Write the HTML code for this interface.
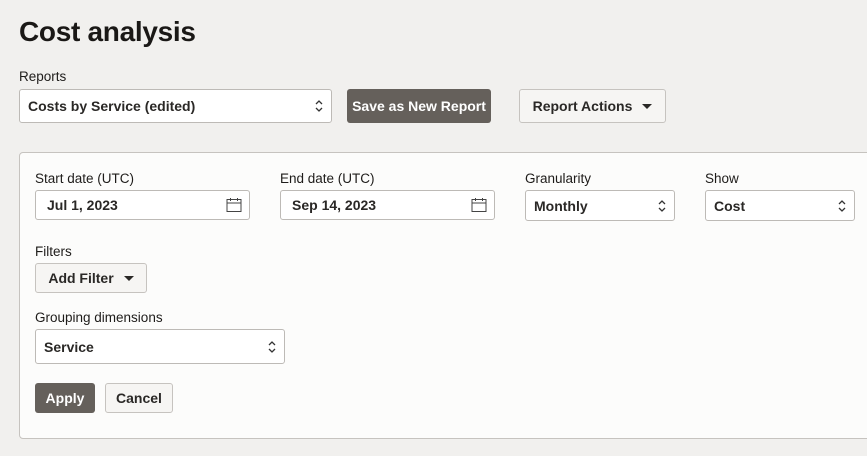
<!DOCTYPE html>
<html><head><style>
*{box-sizing:border-box;margin:0;padding:0}
body{width:867px;height:456px;overflow:hidden;background:#f1f0ee;font-family:"Liberation Sans",sans-serif;color:#1a1816;position:relative}
.a{position:absolute}
.lbl{font-size:13.5px;color:#1e1c1a}
.box{position:absolute;background:#fff;border:1px solid #bdbab6;border-radius:3px;font-size:14px;font-weight:bold;color:#2a2826;display:flex;align-items:center;padding-left:8px}
.btn{position:absolute;border-radius:3px;font-size:14px;font-weight:bold;display:flex;align-items:center;justify-content:center}
.sec{background:#f6f5f3;border:1px solid #c6c3bf;color:#2a2826}
.pri{background:#65605b;color:#fff}
.chev{position:absolute;right:7px;top:50%;margin-top:-7px}
.cal{position:absolute;right:7px;top:50%;margin-top:-8px}
.tri{display:inline-block;width:0;height:0;border-left:5px solid transparent;border-right:5px solid transparent;border-top:5px solid #2a2826;margin-left:10px}
</style></head><body>
<div class="a" style="left:19px;top:16px;font-size:28px;font-weight:bold;letter-spacing:-0.3px">Cost analysis</div>
<div class="a lbl" style="left:19px;top:69px">Reports</div>
<div class="box" style="left:19px;top:89px;width:313px;height:34px">Costs by Service (edited)
<svg class="chev" width="10" height="14" viewBox="0 0 10 14"><path d="M2 5L5 2L8 5M2 9L5 12L8 9" fill="none" stroke="#333" stroke-width="1.3"/></svg></div>
<div class="btn pri" style="left:347px;top:89px;width:144px;height:34px">Save as New Report</div>
<div class="btn sec" style="left:519px;top:89px;width:147px;height:34px">Report Actions<span class="tri"></span></div>

<div class="a" style="left:19px;top:152px;width:860px;height:287px;background:#fcfcfb;border:1px solid #c6c3bf;border-radius:4px"></div>
<div class="a lbl" style="left:35px;top:171px">Start date (UTC)</div>
<div class="a lbl" style="left:280px;top:171px">End date (UTC)</div>
<div class="a lbl" style="left:525px;top:171px">Granularity</div>
<div class="a lbl" style="left:705px;top:171px">Show</div>
<div class="box" style="left:35px;top:190px;width:215px;height:30px;padding-left:11px">Jul 1, 2023
<svg class="cal" width="16" height="16" viewBox="0 0 16 16"><rect x="1" y="2.5" width="14" height="12" fill="none" stroke="#444" stroke-width="1"/><path d="M1 6h14M4.5 1v3M11.5 1v3" stroke="#444"/></svg></div>
<div class="box" style="left:280px;top:190px;width:215px;height:30px;padding-left:11px">Sep 14, 2023
<svg class="cal" width="16" height="16" viewBox="0 0 16 16"><rect x="1" y="2.5" width="14" height="12" fill="none" stroke="#444" stroke-width="1"/><path d="M1 6h14M4.5 1v3M11.5 1v3" stroke="#444"/></svg></div>
<div class="box" style="left:525px;top:190px;width:150px;height:31px">Monthly
<svg class="chev" width="10" height="14" viewBox="0 0 10 14"><path d="M2 5L5 2L8 5M2 9L5 12L8 9" fill="none" stroke="#333" stroke-width="1.3"/></svg></div>
<div class="box" style="left:705px;top:190px;width:150px;height:31px">Cost
<svg class="chev" width="10" height="14" viewBox="0 0 10 14"><path d="M2 5L5 2L8 5M2 9L5 12L8 9" fill="none" stroke="#333" stroke-width="1.3"/></svg></div>

<div class="a lbl" style="left:35px;top:244px">Filters</div>
<div class="btn sec" style="left:35px;top:263px;width:112px;height:30px">Add Filter<span class="tri"></span></div>
<div class="a lbl" style="left:35px;top:310px">Grouping dimensions</div>
<div class="box" style="left:35px;top:329px;width:250px;height:35px">Service
<svg class="chev" width="10" height="14" viewBox="0 0 10 14"><path d="M2 5L5 2L8 5M2 9L5 12L8 9" fill="none" stroke="#333" stroke-width="1.3"/></svg></div>
<div class="btn pri" style="left:35px;top:383px;width:60px;height:30px">Apply</div>
<div class="btn sec" style="left:105px;top:383px;width:68px;height:30px">Cancel</div>
</body></html>
